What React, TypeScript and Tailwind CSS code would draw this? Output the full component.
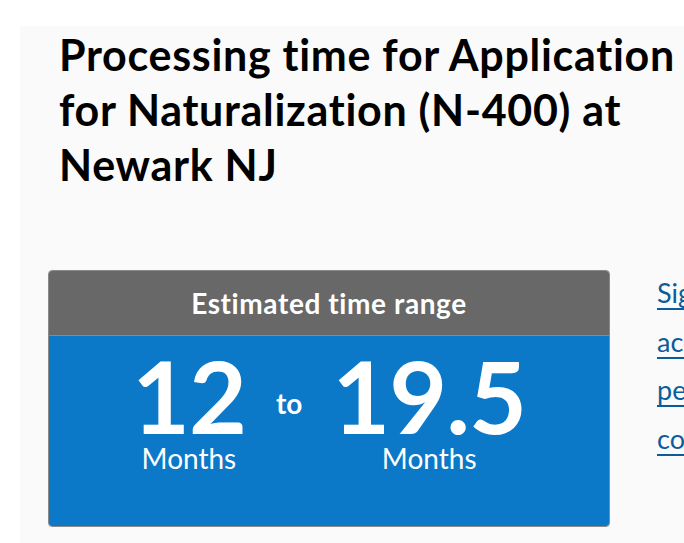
import React from "react";

const font = "font-['Lato','Liberation_Sans',sans-serif] [font-variant-ligatures:none]";

const RangeValue: React.FC<{ value: string }> = ({ value }) => (
  <div className="flex flex-col items-center">
    <span className="text-[100px] leading-[100px] font-bold tracking-[-1px]">
      {value}
    </span>
    <span className="text-[28px] leading-[30px] -mt-[2px]">Months</span>
  </div>
);

const App: React.FC = () => {
  return (
    <div className={`w-[684px] h-[543px] overflow-hidden bg-white ${font}`}>
      <div className="ml-[20px] mt-[26px] w-[900px] h-[517px] bg-[#fafafa] pt-[1px]">
        <h1 className="pl-[39px] w-[690px] text-[43px] leading-[55px] font-bold tracking-[0.7px] text-black">
          Processing time for Application for Naturalization (N-400) at Newark
          NJ
        </h1>
        <div className="flex mt-[78px] pl-[28px] gap-[47px]">
          <div className="w-[562px] h-[257px] shrink-0 flex flex-col rounded-[4px] border border-[#8a8a8a] overflow-hidden">
            <div className="h-[65px] bg-[#686868] border-b border-[#8a8a8a] flex items-center justify-center text-white text-[28px] font-bold tracking-[0.6px]">
              Estimated time range
            </div>
            <div className="flex-1 bg-[#0b78c8] text-white flex justify-center items-start pt-[9px] gap-[30px]">
              <RangeValue value="12" />
              <span className="text-[28px] font-bold mt-[37px]">to</span>
              <RangeValue value="19.5" />
            </div>
          </div>
          <div className="w-[220px] shrink-0 text-[27px] leading-[48.5px] text-[#0b5c9c] -mt-[1px]">
            <a
              href="#"
              className="underline underline-offset-[5px] decoration-2"
            >
              Sign in to your
              <br />
              account for
              <br />
              personalized
              <br />
              content
            </a>
          </div>
        </div>
      </div>
    </div>
  );
};

export default App;
